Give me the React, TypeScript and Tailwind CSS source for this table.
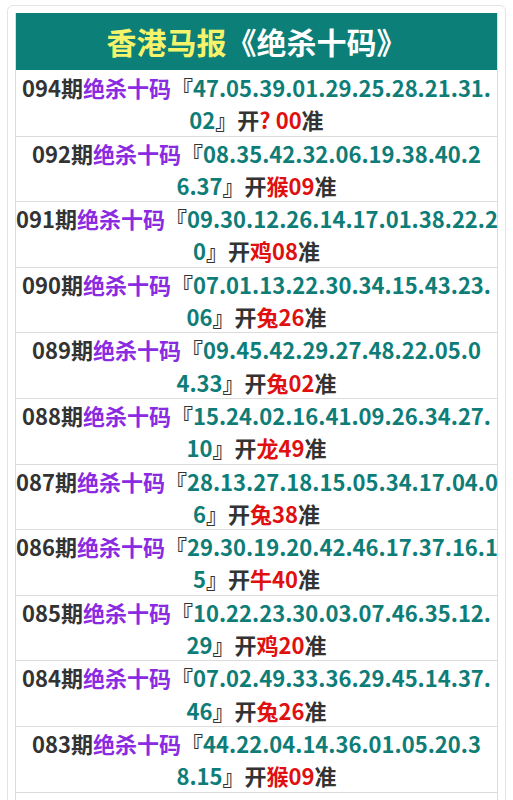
const rows: [string, string, string, string][] = [
  ["094", "47.05.39.01.29.25.28.21.31.", "02", "? 00"],
  ["092", "08.35.42.32.06.19.38.40.2", "6.37", "猴09"],
  ["091", "09.30.12.26.14.17.01.38.22.2", "0", "鸡08"],
  ["090", "07.01.13.22.30.34.15.43.23.", "06", "兔26"],
  ["089", "09.45.42.29.27.48.22.05.0", "4.33", "兔02"],
  ["088", "15.24.02.16.41.09.26.34.27.", "10", "龙49"],
  ["087", "28.13.27.18.15.05.34.17.04.0", "6", "兔38"],
  ["086", "29.30.19.20.42.46.17.37.16.1", "5", "牛40"],
  ["085", "10.22.23.30.03.07.46.35.12.", "29", "鸡20"],
  ["084", "07.02.49.33.36.29.45.14.37.", "46", "兔26"],
  ["083", "44.22.04.14.36.01.05.20.3", "8.15", "猴09"],
  ["082", "12.31.06.40.25.18.33.47.09.", "21", "马11"],
];

export default function App() {
  return (
    <div
      className="bg-white px-[7px] pt-[5px] h-[800px] overflow-hidden"
      style={{ fontFamily: '"Noto Sans CJK SC", "Noto Sans", sans-serif' }}
    >
      <div className="rounded-md border border-[#e4e4e4] px-[7px] pt-[7px]">
        <div className="border-x border-[#dcdcdc]">
          {/* header */}
          <div className="h-[57px] bg-[#0b7f78] flex items-center justify-center text-[30px] font-bold">
            <span className="text-[#f4f46a]">香港马报</span>
            <span className="text-white">《绝杀十码》</span>
          </div>

          {rows.map(([no, a, b, res], i) => (
            <div
              key={no}
              className={`border-b border-[#dcdcdc] text-center text-[22px] font-bold leading-[32.3px] whitespace-nowrap text-[#333] ${i === 0 ? "pt-px" : ""}`}
            >
              <div>
                <span>{no}期</span>
                <span className="text-[#8a2be2]">绝杀十码</span>
                <span>『</span>
                <span className="text-[#0e7d77]">{a}</span>
              </div>
              <div>
                <span className="text-[#0e7d77]">{b}</span>
                <span>』开</span>
                <span className="text-[#e01010]">{res}</span>
                <span>准</span>
              </div>
            </div>
          ))}
        </div>
      </div>
    </div>
  );
}
